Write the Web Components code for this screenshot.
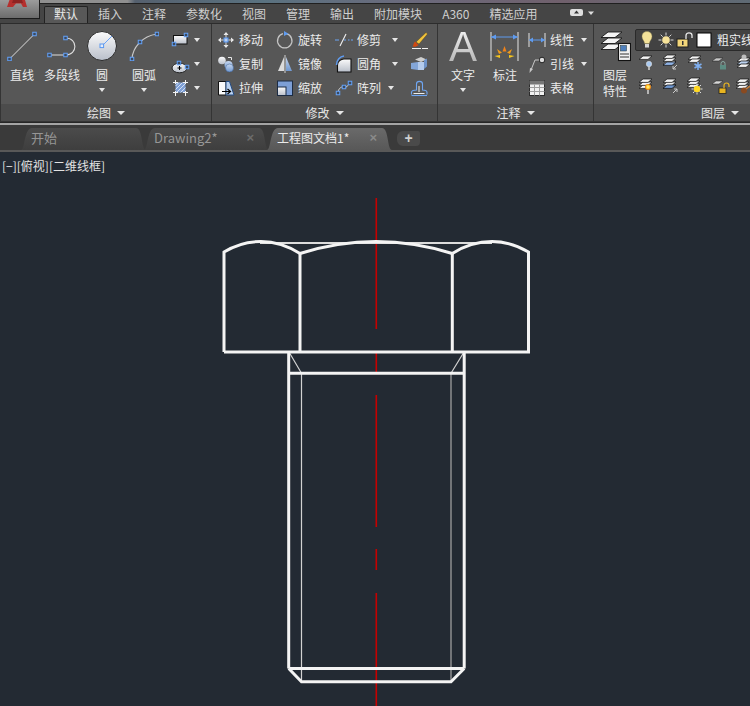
<!DOCTYPE html>
<html lang="zh"><head><meta charset="utf-8"><title>工程图文档1</title>
<style>
html,body{margin:0;padding:0;background:#232a33}
body{width:750px;height:706px;overflow:hidden;font:12px "Noto Sans CJK SC","Liberation Sans",sans-serif;color:#e4e4e4}
</style></head><body>
<cad-app>
  <ribbon-tabs>
    <ribbon-tab active>默认</ribbon-tab><ribbon-tab>插入</ribbon-tab><ribbon-tab>注释</ribbon-tab><ribbon-tab>参数化</ribbon-tab><ribbon-tab>视图</ribbon-tab><ribbon-tab>管理</ribbon-tab><ribbon-tab>输出</ribbon-tab><ribbon-tab>附加模块</ribbon-tab><ribbon-tab>A360</ribbon-tab><ribbon-tab>精选应用</ribbon-tab>
  </ribbon-tabs>
  <ribbon-bar>
    <ribbon-panel label="绘图" w="210" pad="1">
      <tool-large label="直线"><cad-icon name="line" size="30"></cad-icon></tool-large>
      <tool-large label="多段线"><cad-icon name="pline" size="30"></cad-icon></tool-large>
      <tool-large label="圆" arrow><cad-icon name="circle" size="32"></cad-icon></tool-large>
      <tool-large label="圆弧" arrow style="margin-left:2px"><cad-icon name="arc" size="30"></cad-icon></tool-large>
      <tool-grid style="--cols:30px;margin-left:6px">
        <tool-small arrow style="--ag:4px"><cad-icon name="rect"></cad-icon></tool-small>
        <tool-small arrow style="--ag:4px"><cad-icon name="ellipse"></cad-icon></tool-small>
        <tool-small arrow style="--ag:4px"><cad-icon name="hatch"></cad-icon></tool-small>
      </tool-grid>
    </ribbon-panel>
    <ribbon-panel label="修改" w="225" pad="4">
      <tool-grid style="--cols:59px 59px 75px 20px">
        <tool-small label="移动"><cad-icon name="move"></cad-icon></tool-small>
        <tool-small label="旋转"><cad-icon name="rotate"></cad-icon></tool-small>
        <tool-small label="修剪" arrow style="--ag:11px"><cad-icon name="trim"></cad-icon></tool-small>
        <tool-small><cad-icon name="brush"></cad-icon></tool-small>
        <tool-small label="复制"><cad-icon name="copy"></cad-icon></tool-small>
        <tool-small label="镜像"><cad-icon name="mirror"></cad-icon></tool-small>
        <tool-small label="圆角" arrow style="--ag:11px"><cad-icon name="fillet"></cad-icon></tool-small>
        <tool-small><cad-icon name="explode"></cad-icon></tool-small>
        <tool-small label="拉伸"><cad-icon name="stretch"></cad-icon></tool-small>
        <tool-small label="缩放"><cad-icon name="scale"></cad-icon></tool-small>
        <tool-small label="阵列" arrow style="--ag:7px"><cad-icon name="array"></cad-icon></tool-small>
        <tool-small><cad-icon name="offset"></cad-icon></tool-small>
      </tool-grid>
    </ribbon-panel>
    <ribbon-panel label="注释" w="155" pad="5">
      <tool-large label="文字" arrow><big-letter>A</big-letter></tool-large>
      <tool-large label="标注" style="margin-left:2px"><cad-icon name="dim" size="30"></cad-icon></tool-large>
      <tool-grid style="--cols:60px;margin-left:2px">
        <tool-small label="线性" arrow style="--ag:7px"><cad-icon name="linear"></cad-icon></tool-small>
        <tool-small label="引线" arrow style="--ag:7px"><cad-icon name="leader"></cad-icon></tool-small>
        <tool-small label="表格"><cad-icon name="table"></cad-icon></tool-small>
      </tool-grid>
    </ribbon-panel>
    <ribbon-panel label="图层" w="252" pad="1">
      <tool-large label="图层" second="特性"><cad-icon name="layerprops" size="32"></cad-icon></tool-large>
      <layer-tools>
        <layer-combo>
          <cad-icon name="bulb"></cad-icon><cad-icon name="sun"></cad-icon><cad-icon name="lock"></cad-icon><cad-icon name="swatch"></cad-icon><span>粗实线</span>
        </layer-combo>
        <tool-grid style="--cols:23px 25px 25px 23px 20px;margin-left:2px">
          <cad-icon name="l1"></cad-icon><cad-icon name="l2"></cad-icon><cad-icon name="l3"></cad-icon><cad-icon name="l4"></cad-icon><cad-icon name="l5"></cad-icon>
          <cad-icon name="l6"></cad-icon><cad-icon name="l7"></cad-icon><cad-icon name="l8"></cad-icon><cad-icon name="l9"></cad-icon><cad-icon name="l10"></cad-icon>
        </tool-grid>
      </layer-tools>
    </ribbon-panel>
  </ribbon-bar>
  <doc-tabs>
    <doc-tab>开始</doc-tab>
    <doc-tab closable>Drawing2*</doc-tab>
    <doc-tab closable active>工程图文档1*</doc-tab>
    <doc-add></doc-add>
  </doc-tabs>
  <model-space label="[−][俯视][二维线框]"></model-space>
</cad-app>
<script>
const H=(x,y)=>`<rect x="${x-1.75}" y="${y-1.75}" width="3.5" height="3.5" fill="#3c4a5e" stroke="#62a0f8" stroke-width="1"/>`;
const sheet=(x,y,f='#f4f4f4')=>`<path d="M${x+4} ${y}h9l-4 3.4h-9z" fill="${f}" stroke="#111" stroke-width=".7"/>`;
const stack=(x,y,f='#f4f4f4')=>sheet(x,y+6,f)+sheet(x,y+3,f)+sheet(x,y,f);
const bigSheet=(y)=>`<path d="M9 ${y}h14l-7 5.500H2z" fill="#f4f4f4" stroke="#161616" stroke-width=".9"/>`;
const defs=`<defs>
<linearGradient id="g" x1="0" y1="0" x2="0" y2="1"><stop offset="0" stop-color="#fbfbfb"/><stop offset="1" stop-color="#b9bfca"/></linearGradient>
<linearGradient id="b" x1="0" y1="0" x2="0" y2="1"><stop offset="0" stop-color="#c7d7ef"/><stop offset="1" stop-color="#6f97cf"/></linearGradient>
<radialGradient id="o"><stop offset="0" stop-color="#fff7b0"/><stop offset=".55" stop-color="#ffcf30"/><stop offset="1" stop-color="#e07010"/></radialGradient>
</defs>`;
const lockI=(x,y,c='#e8b420')=>`<rect x="${x}" y="${y}" width="7" height="5.5" fill="${c}" stroke="#222" stroke-width=".8"/><path d="M${x+5} ${y}v-2.5a2.5 2.5 0 0 1 5 0v1.5" fill="none" stroke="${c}" stroke-width="1.2"/>`;
const ICONS={
line:`<path d="M2.500 28L27.500 3" stroke="#ddd" fill="none"/>${H(2.5,28)}${H(27.5,3)}`,
pline:`<path d="M2.500 24H18.500M18.500 7C31 7 31 24 18.500 24" stroke="#ddd" fill="none" stroke-width="1.100"/>${H(2.5,24)}${H(18.5,24)}${H(18.5,7)}`,
circle:`<circle cx="16" cy="16" r="14.500" fill="url(#g)" stroke="#2b2b2b"/><path d="M16 16L26 6" stroke="#6ba4f8"/><rect x="14" y="14" width="3.600" height="3.600" fill="#e6edf8" stroke="#5a98f0"/>`,
arc:`<path d="M3 28C3.500 17 13 5 28 3" stroke="#c9c9c9" fill="none" stroke-width="1.200"/>${H(3,28)}${H(11,11)}${H(28,3)}`,
rect:`<rect x="3.500" y="5.500" width="13.500" height="8.500" fill="url(#g)" stroke="#111"/>${H(16,5)}${H(4,14)}`,
ellipse:`<ellipse cx="9.500" cy="14" rx="7.500" ry="4.800" fill="url(#g)" stroke="#222"/><path d="M7.500 14h4M9.500 12v4" stroke="#000"/>${H(9,9)}${H(17,13)}`,
hatch:`<rect x="5.500" y="4.500" width="10" height="10" fill="#7fa0d6"/><path d="M5.500 8l3.500-3.500M5.500 11.500l7-7M6.500 14.500l9-9M10.500 14.500l5-5" stroke="#dbe6f6" stroke-width=".9"/><path d="M5.500 2v4M5.500 13v5M15.500 2v4M15.500 13v5M3 4.500h5M13 4.500h5M3 14.500h5M13 14.500h5" stroke="#f4f4f4" fill="none"/>`,
move:`<path d="M10 2l2.500 3h-5zM10 18l2.500-3h-5zM2 10l3-2.500v5zM18 10l-3-2.500v5z" fill="#ececec"/><path d="M10 4v12M4 10h12" stroke="#d8d8d8"/><rect x="8" y="8" width="4" height="4" fill="#bcd0ee" stroke="#4f90ee"/>`,
rotate:`<path d="M8 3.700a7.200 7.200 0 1 0 3.500 0" fill="none" stroke="#c4c4c4" stroke-width="1.300"/><path d="M9 1l4.500 2.800L9 6z" fill="#5f9bef"/>`,
trim:`<path d="M1 10h4M14 10h1.500M17 10h2" stroke="#6ca6f5"/><path d="M6 16L12 4" stroke="#f0f0f0" stroke-width="1.100"/><path d="M10 10h2" stroke="#6ca6f5"/>`,
brush:`<path d="M7 12L17 2.500l1.500 1.500L10 14z" fill="#f2c33c" stroke="#4a3a10" stroke-width=".4"/><path d="M6 11.500l3.500 3.500c-2 2-4.500 2.200-6 1.200 1.200-.6.800-3.500 2.500-4.700z" fill="#d04a12"/><path d="M3 18.500h16" stroke="#f2f2f2" stroke-dasharray="9 1 6"/>`,
copy:`<circle cx="6" cy="6.500" r="3.800" fill="url(#g)"/><circle cx="12.500" cy="11" r="4" fill="url(#b)"/><circle cx="13.500" cy="14" r="4" fill="url(#b)" stroke="#3b5f93" stroke-width=".5"/><path d="M12 3.500h3.500v2.500" stroke="#e8e8e8" fill="none"/>`,
mirror:`<path d="M9 3L3 17h6z" fill="#dcdcdc"/><path d="M11 3l6 14h-6z" fill="url(#b)"/><path d="M10 1v18" stroke="#f4f4f4" stroke-width=".8"/>`,
fillet:`<path d="M17 5v13H3.500v-7C3.500 7.500 7 5 10 5z" fill="url(#g)" stroke="#111" stroke-width="1.100"/><path d="M2.500 11C2.500 6 6 2.500 10 2" fill="none" stroke="#5f9bef" stroke-width="1.500"/>`,
explode:`<path d="M2 9l7-1v8l-7-1z" fill="#83a6d8"/><path d="M9 8l6 0v8H9z" fill="#b4cbec"/><path d="M6 5.500l6-2.500 5.500 2.500-5.500 2.500z" fill="#cfcfcf"/><path d="M15 6l3-1.500v8L15 15z" fill="#6f93c8"/>`,
stretch:`<path d="M2.500 3.500H10V17H2.500z" fill="#fafafa" stroke="#111"/><path d="M10 3.500h3.500L18 17h-8z" fill="#bcd2ef" stroke="#244c84"/><path d="M6 13.500h8M11.500 11l3 2.500-3 2.500" stroke="#000" fill="none" stroke-width="1.200"/>`,
scale:`<rect x="2.500" y="3" width="15" height="14.500" fill="#7d9fd6" stroke="#1c2c44"/><rect x="2.500" y="9" width="8.500" height="8.500" fill="url(#g)" stroke="#1c2c44"/>`,
array:`<path d="M4 15c0-4 3-6 4-6s2 2 3 1 3-2 5-5" fill="none" stroke="#ddd"/>${H(4,15)}${H(10,9)}${H(16,5)}`,
offset:`<path d="M2.500 16.500v-2c0-2 2.500-2.500 5-2.500V6c0-3.500 6-3.500 6 0v6c2.500 0 4.500.5 4.500 2.500v2" fill="none" stroke="#6fa6f3" stroke-width="1.100"/><path d="M2.500 17.500H18" fill="none" stroke="#6fa6f3" stroke-width="1.100"/><path d="M4.500 15.500h11M10 8v6" fill="none" stroke="#ededed"/>`,
dim:`<path d="M1 1v29M28 1v29" stroke="#d8d8d8" stroke-width="1.100"/><path d="M1 6h27" stroke="#5f9bef"/><path d="M1 6l5-2.500v5zM28 6l-5-2.500v5z" fill="#5f9bef"/><path d="M14.500 15l2 5.500h-4z" fill="#f0831a"/><path d="M7 18l5 3.500-3 1.500zM22 18l-5 3.500 3 1.500z" fill="#f09a1a"/><path d="M4.500 25l5.500-1v3zM24.500 25l-5.500-1v3z" fill="#f6c61e"/>`,
linear:`<path d="M2 3v14M18 3v14" stroke="#e4e4e4"/><path d="M2 10h16" stroke="#5f9bef"/><path d="M2 10l4-2.500v5zM18 10l-4-2.500v5z" fill="#5f9bef"/>`,
leader:`<circle cx="15" cy="6" r="2.800" fill="#ddd" stroke="#222"/><path d="M12 6H8L4 16" stroke="#c8c8c8" fill="none"/><path d="M2.500 19l.5-5 3 1z" fill="#c8c8c8"/>`,
table:`<rect x="2.500" y="2.500" width="15" height="15" fill="#f0f0f0" stroke="#2c2c2c"/><rect x="2.500" y="2.500" width="15" height="4" fill="#777"/><path d="M2.500 9.500h15M2.500 13.500h15M7.500 6.500v11M12.500 6.500v11" stroke="#9d9d9d"/>`,
layerprops:`${bigSheet(14)}${bigSheet(8)}${bigSheet(2)}<rect x="19.500" y="13.500" width="12" height="17" fill="#f2f2f2" stroke="#111" stroke-width="1.100"/><rect x="21.500" y="15.500" width="6" height="5.500" fill="#4f80bd" stroke="#233"  stroke-width=".5"/><path d="M21 24h9M21 27h9" stroke="#333"/>`,
bulb:`<path d="M10 1.500c3.500 0 5 2.500 5 5 0 3-2.200 4-2.700 7h-4.600C7.200 10.500 5 9.500 5 6.500c0-2.500 1.500-5 5-5z" fill="#f4e29a" stroke="#8c8250" stroke-width=".4"/><rect x="8" y="14" width="4" height="3.500" fill="#d5d5d5"/>`,
sun:`<circle cx="10" cy="10" r="3.800" fill="#f7e39a"/><path d="M10 2.500v3M10 14.500v3M2.500 10h3M14.500 10h3M4.700 4.700l2 2M13.300 13.300l2 2M4.700 15.300l2-2M13.300 6.700l2-2" stroke="#d8d8d8"/>`,
lock:`<rect x="2" y="9" width="11" height="8" fill="#f3d67a" stroke="#1e1e1e"/><rect x="7" y="11" width="1.500" height="4" fill="#333"/><path d="M11 9V5.500c0-3.500 6-3.500 6 0V8" fill="none" stroke="#e8e8e8" stroke-width="1.300"/>`,
swatch:`<rect x="3" y="3" width="14" height="14" fill="#fff" stroke="#000"/>`,
l1:`${sheet(2,3)}<circle cx="12" cy="11" r="2.700" fill="#a9caf2" stroke="#ddd" stroke-width=".6"/><path d="M12 13.500v3.500" stroke="#ddd" stroke-width="1.400"/>`,
l2:`${stack(3,2)}${sheet(3,9,'#8fb2e4')}<path d="M17 12l-4 4M13 13v3h3" stroke="#ccc" fill="none"/>`,
l3:`${sheet(3,3)}${sheet(3,6)}<path d="M13 9v8M9.500 11l7 4M16.500 11l-7 4" stroke="#7fb0f2" stroke-width="1.500"/>`,
l4:`<path d="M6 5h7l-4 3H2z" fill="#c7c7c7" stroke="#222" stroke-width=".5"/><rect x="10" y="12" width="6" height="4.500" fill="#5d8c82"/><path d="M11 12v-1.500a2 2 0 0 1 4 0V12" fill="none" stroke="#8aa9a2"/>`,
l5:`${sheet(4,5)}${sheet(4,8,'#bcd2ef')}${sheet(4,11)}<circle cx="11" cy="4" r="2.500" fill="#bdbdbd"/>`,
l6:`${stack(2,2)}<circle cx="11" cy="10" r="3" fill="url(#o)"/><path d="M11 13v4" stroke="#ddd" stroke-width="1.400"/>`,
l7:`${stack(3,2,'#f2f2f2')}${sheet(3,8,'#6f97cf')}<path d="M13 16l4-4M14 12h3v3" stroke="#ccc" fill="none"/>`,
l8:`${stack(2,1)}<circle cx="12" cy="12" r="3.300" fill="#ffd820"/><path d="M12 6.500v2M12 15.500v2M6.500 12h2M15.500 12h2M8 8l1.500 1.500M14.500 14.500L16 16M8 16l1.500-1.500M14.500 9.500L16 8" stroke="#ddd"/>`,
l9:`<path d="M6 4h7l-4 3H2z" fill="#d8d8d8" stroke="#222" stroke-width=".5"/>${lockI(9,11)}`,
l10:`${stack(3,2)}<circle cx="11" cy="13.500" r="3" fill="#8a4a20"/><path d="M13 12l4-3" stroke="#c67b35" stroke-width="1.500"/>`
};
function def(tag,css,html){
  customElements.define(tag,class extends HTMLElement{
    constructor(){super();this.attachShadow({mode:'open'});}
    connectedCallback(){
      this.shadowRoot.innerHTML=`<style>${css}</style>`+(typeof html==='function'?html(this):html);
    }
  });
}
def('cad-app',`:host{display:flex;flex-direction:column;width:750px;height:706px;position:relative;overflow:hidden}
.top{height:3px;background:linear-gradient(90deg,#8f8f8f 0,#8f8f8f 17%,#55606e 18%,#5a7280 35%,#6b6a7c 55%,#70606c 75%,#5e6a74 100%);border-bottom:1px solid #202020;flex:none}
.app{position:absolute;left:0;top:0;width:39px;height:18px;background:linear-gradient(#9c9c9c,#6c6c6c);border-right:1px solid #1c1c1c;border-bottom:1px solid #1c1c1c;z-index:3;overflow:hidden}
svg{display:block}`,
`<div class="top"></div><div class="app"><svg width="39" height="18"><path d="M7 7L9.500 0H25l2 7h-4l-2-3.500h-5L13 7z" fill="#b5302e"/><path d="M13 0h9l1 3H12z" fill="#8e2422"/></svg></div><slot></slot>`);
def('ribbon-tabs',`:host{display:flex;flex:none;height:19px;padding-left:44px;background:#454545;align-items:flex-end}`,`<slot></slot><cad-icon name="__pill"></cad-icon>`);
def('ribbon-tab',`:host{display:block;padding:0 9px;height:17px;line-height:14px;color:#cfcfcf;font-size:12px;box-sizing:border-box;border:1px solid transparent;border-bottom:0}
:host([active]){background:#585858;border-color:#222;color:#e8e8e8;border-radius:2px 2px 0 0}`,`<slot></slot>`);
def('ribbon-bar',`:host{display:flex;flex:none;gap:1px;height:98px;padding-left:1px;background:#343434;border-top:1px solid #2c2c2c;border-bottom:1px solid #262626;overflow:hidden}`,`<slot></slot>`);
def('ribbon-panel',`:host{display:flex;flex-direction:column;flex:none;background:#575757;height:97px}
.body{display:flex;height:80px;box-sizing:border-box;padding-top:4px}
.foot{display:flex;height:17px;background:#4c4c4c;align-items:center;justify-content:center;gap:6px;color:#e6e6e6;line-height:17px}`,
el=>{el.style.width=el.getAttribute('w')+'px';return `<div class="body" style="padding-left:${el.getAttribute('pad')}px"><slot></slot></div><div class="foot">${el.getAttribute('label')}<drop-arrow w></drop-arrow></div>`});
def('drop-arrow',`:host{display:block;flex:none;width:0;height:0;border-left:3.500px solid transparent;border-right:3.500px solid transparent;border-top:4px solid #e6e6e6}
:host([w]){border-left-width:4px;border-right-width:4px}`,``);
def('tool-large',`:host{display:flex;flex-direction:column;align-items:center;width:40px;flex:none;color:#ececec}
.i{height:36px;display:flex;align-items:center;justify-content:center}
.l{line-height:16px;white-space:nowrap;margin-top:3px;text-align:center}
.a{margin-top:5px}`,
el=>`<div class="i"><slot></slot></div><div class="l">${el.getAttribute('label')}${el.hasAttribute('second')?'<br>'+el.getAttribute('second'):''}</div>${el.hasAttribute('arrow')?'<div class="a"><drop-arrow></drop-arrow></div>':''}`);
def('tool-grid',`:host{display:grid;flex:none;grid-template-columns:var(--cols);grid-auto-rows:24px;align-items:center}`,`<slot></slot>`);
def('tool-small',`:host{display:flex;align-items:center;height:24px;color:#ececec;white-space:nowrap}
.l{margin-left:3px;line-height:16px}
drop-arrow{margin-left:var(--ag,6px)}`,
el=>`<slot></slot>${el.hasAttribute('label')?`<span class="l">${el.getAttribute('label')}</span>`:''}${el.hasAttribute('arrow')?'<drop-arrow></drop-arrow>':''}`);
def('big-letter',`:host{display:block;height:35px;padding-top:1px;font:42px/36px "Liberation Sans",sans-serif;background:linear-gradient(#f4f4f4,#b4b4b4);-webkit-background-clip:text;background-clip:text;color:transparent}`,`<slot></slot>`);
def('layer-tools',`:host{display:flex;flex-direction:column;flex:none;width:200px}`,`<slot></slot>`);
def('layer-combo',`:host{display:flex;align-items:center;height:22px;box-sizing:border-box;margin-top:1px;padding-left:1px;background:#424242;border:1px solid #2a2a2a;border-radius:2px;color:#eee;white-space:nowrap}
::slotted(cad-icon){margin-right:-1px}
::slotted(span){margin-left:4px;padding-bottom:1px}`,`<slot></slot>`);
customElements.define('cad-icon',class extends HTMLElement{
  constructor(){super();this.attachShadow({mode:'open'});}
  connectedCallback(){
    const n=this.getAttribute('name');
    if(n==='__pill'){
      this.shadowRoot.innerHTML=`<style>:host{display:block;margin:0 0 5px 0}svg{display:block;margin-left:22px}</style><svg width="28" height="10"><rect x="1" y="1" width="13" height="7" rx="2" fill="#dedede"/><path d="M7.500 2.500l2.500 3H5z" fill="#333"/><path d="M19 3.500h6l-3 3.500z" fill="#ddd"/></svg>`;
      return;
    }
    const s=+this.getAttribute('size')||20;
    this.shadowRoot.innerHTML=`<style>:host{display:block;width:${s}px;height:${s}px;flex:none}svg{display:block}</style><svg width="${s}" height="${s}" viewBox="0 0 ${s} ${s}">${defs}${ICONS[n]||''}</svg>`;
  }
});
def('doc-tabs',`:host{display:flex;flex:none;height:29px;box-sizing:border-box;padding:3px 0 0 21px;background:linear-gradient(#3a3a3a 0,#3a3a3a 25px,#585858 25px);border-top:2px solid #a4a4a4;align-items:flex-start}`,`<slot></slot>`);
def('doc-tab',`:host{display:flex;align-items:center;justify-content:space-between;flex:none;box-sizing:border-box;width:125px;height:22px;margin-right:-2px;padding:0 15px 4px 10px;background:linear-gradient(#4b4b4b,#3e3e3e);color:#969696;font:13px "Noto Sans CJK SC","Open Sans",sans-serif;clip-path:path("M0 22C4 22 3 0 11 0L115 0C122 0 120 22 125 22Z");white-space:nowrap}
:host([active]){background:linear-gradient(#6a6a6a,#585858);color:#eaeaea;font-size:12px}
.x{color:#6c6c6c;font:bold 13px "Liberation Sans",sans-serif}
:host([active]) .x{color:#8a8a8a}`,
el=>`<span><slot></slot></span>${el.hasAttribute('closable')?'<span class="x">×</span>':''}`);
def('doc-add',`:host{display:flex;align-items:center;justify-content:center;flex:none;width:23px;height:15px;margin:3px 0 0 7px;background:#4a4a4a;color:#cfcfcf;border-radius:6px 2px 4px 6px;font:bold 14px/15px "Liberation Sans",sans-serif}`,`+`);
def('model-space',`:host{display:block;position:relative;flex:1;background:#232a33}
.t{position:absolute;left:2px;top:6px;font-size:12px;line-height:16px;color:#e2e2e2;white-space:nowrap}
svg{position:absolute;left:0;top:0}`,
el=>`<svg width="750" height="554" viewBox="0 152 750 554">
<g fill="none" stroke="#c60000" stroke-width="1.600"><path d="M376.300 198V329M376.300 352V372M376.300 395V527M376.300 549V570M376.300 593V706"/></g>
<g fill="none" stroke="#d2d2d2" stroke-width="1.200"><path d="M289 352L301.500 373.300M464 352L451 373.300M301.500 373.300V682"/><path d="M451 373.300V682" stroke="#a8a8a8"/><path d="M260 243H492" stroke-width="1.800" stroke="#dcdcdc"/></g>
<g fill="none" stroke="#f4f4f4" stroke-width="3" stroke-linejoin="miter">
<path d="M224 352V252Q241 241.500 261 241.500Q281 241.500 300 253.500M300 253.500Q338 241.500 376 241.500Q414 241.500 452.300 253.500M452.300 253.500Q471 241.500 492 241.500Q511 241.500 528.500 252V352H224"/>
<path d="M300 253.500V352M452.300 253.500V352"/>
<path d="M288.700 352V668.500M464.200 352V668.500M288.700 373.300H464.200M288.700 668.500H464.200M288.700 668.500L301.500 681.800H451L464.200 668.500"/>
</g></svg><div class="t">${el.getAttribute('label')}</div>`);
</script>
</body></html>
